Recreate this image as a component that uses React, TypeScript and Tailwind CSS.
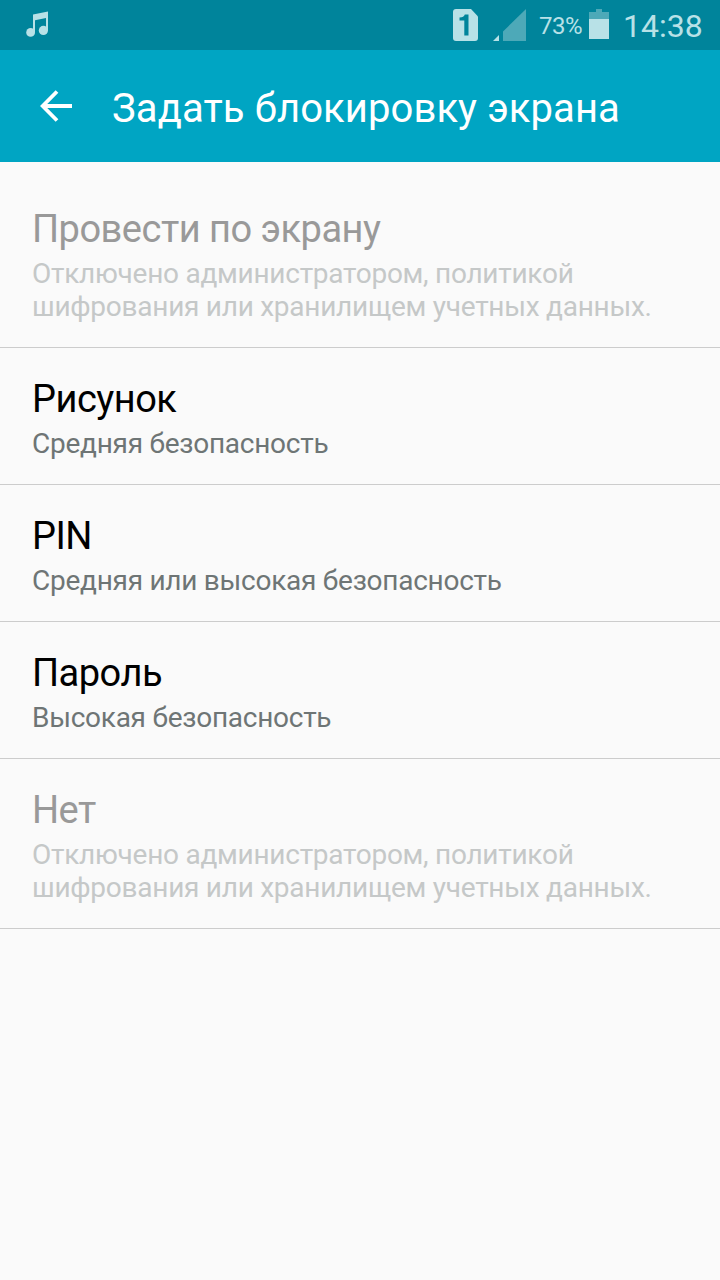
import React from 'react';

interface LockOption {
  id: string;
  title: string;
  summary: string;
  disabled?: boolean;
}

const disabledSummary = 'Отключено администратором, политикой шифрования или хранилищем учетных данных.';

const lockOptions: LockOption[] = [
  { id: 'swipe', title: 'Провести по экрану', summary: disabledSummary, disabled: true },
  { id: 'pattern', title: 'Рисунок', summary: 'Средняя безопасность' },
  { id: 'pin', title: 'PIN', summary: 'Средняя или высокая безопасность' },
  { id: 'password', title: 'Пароль', summary: 'Высокая безопасность' },
  { id: 'none', title: 'Нет', summary: disabledSummary, disabled: true },
];

function MusicIcon() {
  return (
    <svg className="w-[24px] h-[28px]" viewBox="0 0 24 28" fill="currentColor">
      <path d="M7 3.6 L22 0.6 V19.5 H20 V7 L9 9.2 V21.5 H7 Z" />
      <circle cx="4.6" cy="21.4" r="4.4" />
      <circle cx="17.4" cy="19.4" r="4.6" />
    </svg>
  );
}

function SimIcon() {
  return (
    <svg className="w-[25px] h-[32px]" viewBox="0 0 25 32">
      <path d="M3 0 H18 L25 7.5 V29 Q25 32 22 32 H3 Q0 32 0 29 V3 Q0 0 3 0 Z" fill="#b8e1e7" />
      <path d="M11.8 5.5 H15.5 V26.5 H11.3 V11.5 H6.5 V8.5 Q11 8.3 11.8 5.5 Z" fill="#00849b" />
    </svg>
  );
}

function SignalIcon() {
  return (
    <svg className="w-[33px] h-[32px]" viewBox="0 0 33 32">
      <path d="M0 32 L6 26 V32 Z" fill="#b8e1e7" />
      <path d="M10 32 V22.5 L33 0 V32 Z" fill="#4da9b8" />
    </svg>
  );
}

function BatteryIcon() {
  return (
    <svg className="w-[20px] h-[30px]" viewBox="0 0 20 30">
      <path d="M0 3 H7 V0 H13 V3 H20 V10 H0 Z" fill="#4da9b8" />
      <rect y="10" width="20" height="20" fill="#b8e1e7" />
    </svg>
  );
}

function StatusBar() {
  return (
    <div className="h-[50px] flex items-center justify-between pl-[26px] pr-[18px] bg-[#00849b] text-[#b8e1e7]">
      <MusicIcon />
      <div className="flex items-center">
        <SimIcon />
        <div className="ml-[15px]">
          <SignalIcon />
        </div>
        <span className="ml-[13px] w-[43px] pt-[2px] text-[24px] leading-none whitespace-nowrap tracking-[-0.5px]">73%</span>
        <div className="ml-[7px] -mt-[2px]">
          <BatteryIcon />
        </div>
        <span className="ml-[14px] w-[79px] pt-[2px] text-[32px] leading-none whitespace-nowrap">14:38</span>
      </div>
    </div>
  );
}

function Header() {
  return (
    <header className="h-[112px] flex items-center pl-[40px] bg-[#00a5c3] text-white">
      <button className="w-[32px] h-[32px]" aria-label="Назад">
        <svg className="w-[32px] h-[32px]" viewBox="0 0 32 32" fill="none" stroke="currentColor" strokeWidth="3.8">
          <path d="M17 1.5 L2.7 16 L17 30.5 M3 16 H32" />
        </svg>
      </button>
      <h1 className="ml-[40px] pt-[6px] text-[40px] leading-[48px] tracking-[0.1px] whitespace-nowrap">Задать блокировку экрана</h1>
    </header>
  );
}

export default function App() {
  return (
    <div className="w-[720px] min-h-screen bg-[#fafafa] font-['Roboto',sans-serif]">
      <StatusBar />
      <Header />

      {/* Lock types */}
      <ul className="pt-4">
        {lockOptions.map((option) => (
          <li key={option.id} className="px-8 pt-[29px] pb-[24px] border-b border-[#cccccc]">
            <h2 className={`text-[38px] leading-[45px] tracking-[-0.5px] ${option.disabled ? 'text-[#999999]' : 'text-black'}`}>
              {option.title}
            </h2>
            <p className={`mt-[5px] text-[28px] leading-[33px] tracking-[-0.26px] ${option.disabled ? 'text-[#c5c8c8]' : 'text-[#6e7575]'}`}>
              {option.summary}
            </p>
          </li>
        ))}
      </ul>
    </div>
  );
}
